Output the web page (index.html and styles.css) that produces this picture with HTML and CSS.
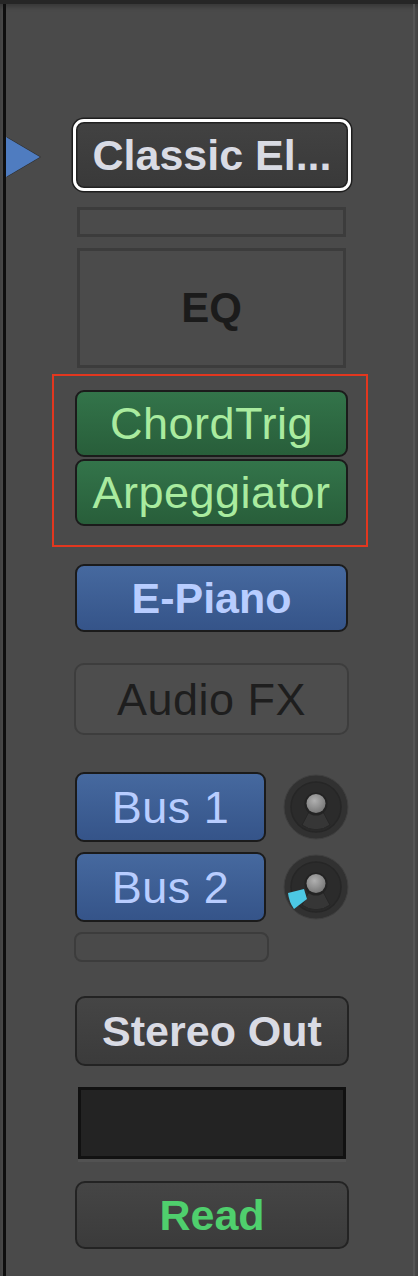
FILE: index.html
```html
<!DOCTYPE html>
<html lang="en">

<head>
    <meta name="viewport" content="width=device-width, initial-scale=1.0">
    <title>Channel Strip</title>

    <link rel="stylesheet" href="styles.css">
</head>

<body>
    <!-- Knob usado nos envios -->
    <svg class="defs" width="0" height="0">
        <defs>
            <radialGradient id="cap" cx="0.42" cy="0.35" r="0.7">
                <stop offset="0" stop-color="#b0b0b0"/>
                <stop offset="1" stop-color="#747474"/>
            </radialGradient>
            <symbol id="knob" viewBox="0 0 66 66">
                <circle cx="33" cy="33" r="32" fill="#313131" stroke="#404040" stroke-width="1"/>
                <circle cx="33" cy="33" r="25" fill="#2b2b2b" stroke="#262626" stroke-width="1.5"/>
                <path d="M28 34 L19 51 A23 23 0 0 0 47 51 L38 34 Z" fill="#363636" stroke="#262626" stroke-width="1"/>
                <path d="M22 53 A22 22 0 0 0 44 53" fill="none" stroke="#2a2a2a" stroke-width="1"/>
            </symbol>
        </defs>
    </svg>

    <!-- Faixa do canal -->
    <div class="strip">
        <div class="rail"></div>

        <div class="lane">
            <!-- Instrumento selecionado -->
            <div class="inst-row">
                <span class="pointer"></span>
                <button class="slot-btn inst">Classic El...</button>
            </div>

            <div class="rack">
                <div class="empty-slot"></div>
                <div class="eq-box">EQ</div>

                <!-- MIDI FX -->
                <div class="midi-group">
                    <button class="slot-btn green">ChordTrig</button>
                    <button class="slot-btn green">Arpeggiator</button>
                </div>

                <button class="slot-btn blue bold">E-Piano</button>
                <button class="slot-btn flat">Audio FX</button>

                <!-- Sends -->
                <div class="send-row first">
                    <button class="slot-btn blue send">Bus 1</button>
                    <svg class="knob" width="66" height="66" viewBox="0 0 66 66">
                        <use href="#knob"/>
                        <circle cx="33" cy="30" r="11.5" fill="#232323"/>
                        <circle cx="33" cy="29.5" r="9.5" fill="url(#cap)"/>
                    </svg>
                </div>
                <div class="send-row">
                    <button class="slot-btn blue send">Bus 2</button>
                    <svg class="knob" width="66" height="66" viewBox="0 0 66 66">
                        <use href="#knob"/>
                        <!-- nível do envio -->
                        <path d="M5 39 L21 35 L24 45 L11 55 Q6 48 5 39 Z" fill="#4cc8e4"/>
                        <circle cx="33" cy="30" r="11.5" fill="#232323"/>
                        <circle cx="33" cy="29.5" r="9.5" fill="url(#cap)"/>
                    </svg>
                </div>
                <div class="send-slot"></div>

                <button class="slot-btn dark bold out">Stereo Out</button>
                <div class="group-box"></div>
                <button class="slot-btn dark bold read">Read</button>
            </div>
        </div>

        <div class="edge"></div>
    </div>
</body>

</html>
```

FILE: styles.css
```css
* {
    padding: 0;
    margin: 0;
    box-sizing: border-box;
}

body {
    background-color: #4a4a4a;
    font-family: 'Liberation Sans', Arial, sans-serif;
}

.defs {
    position: absolute;
}

.strip {
    display: flex;
    width: 418px;
    height: 1276px;
    background-color: #4a4a4a;
    border-top: 4px solid #262626;
    box-shadow: inset 0 3px 4px rgba(0, 0, 0, 0.25);
}

.rail {
    width: 3px;
    margin-left: 3px;
    background-color: #0e0e0e;
}

.lane {
    width: 407px;
    padding-top: 115px;
}

.edge {
    width: 2px;
    background-color: #545454;
}

.inst-row {
    display: flex;
    align-items: center;
}

.pointer {
    width: 0;
    height: 0;
    margin-top: 4px;
    border-top: 20px solid transparent;
    border-bottom: 20px solid transparent;
    border-left: 34px solid #4f7cc0;
    filter: drop-shadow(1px 0 0 #2a2a2a);
}

.slot-btn {
    display: flex;
    justify-content: center;
    align-items: center;
    width: 273px;
    height: 68px;
    border: 2px solid #1b1b1b;
    border-radius: 9px;
    font-family: 'Liberation Sans', Arial, sans-serif;
    font-size: 45px;
    line-height: 1;
    letter-spacing: 0.5px;
    white-space: nowrap;
}

.bold {
    font-weight: bold;
    font-size: 43px;
    letter-spacing: 0;
}

.inst {
    width: 278px;
    height: 72px;
    margin-left: 33px;
    border: 3px solid #ffffff;
    border-radius: 11px;
    box-shadow: 0 0 0 1.5px #1e1e1e, inset 0 0 0 1.5px #222;
    background: linear-gradient(#424242, #393939);
    color: #d9dbe4;
    font-weight: bold;
    font-size: 43px;
    letter-spacing: 0;
}

.rack {
    display: flex;
    flex-direction: column;
    width: 274px;
    margin-left: 69px;
}

.empty-slot {
    width: 269px;
    height: 30px;
    margin: 16px 0 0 2px;
    border: 3px solid #3c3c3c;
    background-color: #4b4b4b;
}

.eq-box {
    display: flex;
    justify-content: center;
    align-items: center;
    width: 269px;
    height: 120px;
    margin: 11px 0 0 2px;
    border: 3px solid #3c3c3c;
    background-color: #4b4b4b;
    color: #1b1b1b;
    font-weight: bold;
    font-size: 42px;
}

.midi-group {
    display: flex;
    flex-direction: column;
    gap: 2px;
    width: 316px;
    margin: 6px 0 0 -23px;
    padding: 14px 18px 19px 21px;
    border: 2px solid #e2371f;
}

.green {
    height: 67px;
    background: linear-gradient(#33744a, #285e3a);
    color: #a9eb9f;
}

.blue {
    background: linear-gradient(#46699f, #355489);
    color: #b8cdff;
}

.blue.bold {
    margin-top: 17px;
}

.flat {
    width: 275px;
    height: 72px;
    margin: 31px 0 0 -1px;
    border: 2px solid #3d3d3d;
    border-radius: 10px;
    background-color: #4d4d4d;
    color: #1e1e1e;
}

.send-row {
    display: flex;
    align-items: center;
    gap: 17px;
    margin-top: 10px;
}

.send-row.first {
    margin-top: 37px;
}

.send {
    width: 194px;
    height: 70px;
}

.knob {
    flex: none;
}

.send-slot {
    width: 195px;
    height: 30px;
    margin: 10px 0 0 -1px;
    border: 2px solid #3c3c3c;
    border-radius: 8px;
    background-color: #4a4a4a;
}

.dark {
    width: 274px;
    height: 70px;
    border: 2px solid #232323;
    border-radius: 10px;
    background: linear-gradient(#454545, #3b3b3b);
}

.out {
    margin-top: 34px;
    color: #d9dbe4;
}

.group-box {
    width: 268px;
    height: 72px;
    margin: 21px 0 0 3px;
    border: 3px solid #111;
    background-color: #232323;
    box-shadow: 0 3px 0 #525252;
}

.read {
    height: 68px;
    margin-top: 22px;
    color: #4fcf6d;
}
```
